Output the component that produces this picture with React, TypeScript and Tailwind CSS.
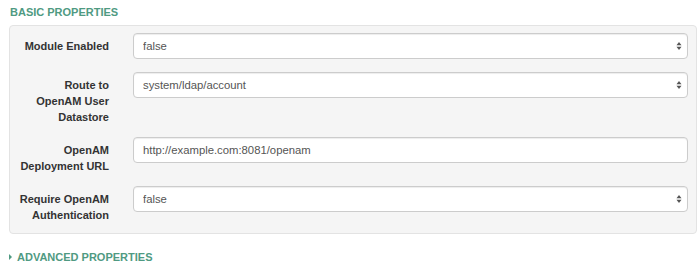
import { ReactNode } from "react"

type Field = {
  label: ReactNode
  value: string
  kind: "select" | "text"
}

const fields: Field[] = [
  { label: "Module Enabled", value: "false", kind: "select" },
  {
    label: (
      <>
        Route to
        <br />
        OpenAM User
        <br />
        Datastore
      </>
    ),
    value: "system/ldap/account",
    kind: "select",
  },
  {
    label: (
      <>
        OpenAM
        <br />
        Deployment URL
      </>
    ),
    value: "http://example.com:8081/openam",
    kind: "text",
  },
  {
    label: (
      <>
        Require OpenAM
        <br />
        Authentication
      </>
    ),
    value: "false",
    kind: "select",
  },
]

function SelectArrows() {
  return (
    <svg
      className="pointer-events-none absolute right-[6px] top-1/2 -translate-y-1/2"
      width="6"
      height="9"
      viewBox="0 0 6 9"
    >
      <path d="M3 0.5 L5.5 3.8 H0.5 Z" fill="#555" />
      <path d="M3 8.5 L5.5 5.2 H0.5 Z" fill="#555" />
    </svg>
  )
}

function Control({ field }: { field: Field }) {
  const base =
    "h-[26px] w-full rounded-[4px] border border-[#cccccc] bg-white pl-[9px] text-[11.3px] text-[#555555] shadow-[inset_0_1px_1px_rgba(0,0,0,0.075)] outline-none"

  if (field.kind === "text") {
    return <input className={base} defaultValue={field.value} readOnly />
  }

  return (
    <div className="relative">
      <select className={`${base} appearance-none pr-6`} defaultValue={field.value}>
        <option value={field.value}>{field.value}</option>
      </select>
      <SelectArrows />
    </div>
  )
}

export default function App() {
  return (
    <div className="h-[280px] w-[700px] overflow-hidden bg-white font-['Liberation_Sans',Arial,sans-serif] antialiased">
      <h2 className="pl-[10px] pt-[4px] text-[11px] font-bold leading-[16px] text-[#4f9a82]">
        BASIC PROPERTIES
      </h2>

      <div className="ml-[9px] mt-[5px] w-[688px] rounded-[4px] border border-[#e3e3e3] bg-[#f5f5f5] pb-[10px] pl-[9px] pr-[8px] pt-[7px]">
        <div className="grid grid-cols-[90px_1fr] gap-x-[24px] gap-y-[12px]">
          {fields.map((field, i) => (
            <div key={i} className="contents">
              <label className="min-h-[27px] pt-[5px] text-right text-[11px] font-bold leading-[16px] text-[#333333]">
                {field.label}
              </label>
              <div>
                <Control field={field} />
              </div>
            </div>
          ))}
        </div>
      </div>

      <div className="mt-[15px] flex items-center gap-[5px] pl-[9px] text-[11px] font-bold leading-[16px] text-[#4f9a82]">
        <svg width="3" height="6" viewBox="0 0 3 6">
          <path d="M0 0 L3 3 L0 6 Z" fill="#4f9a82" />
        </svg>
        ADVANCED PROPERTIES
      </div>
    </div>
  )
}
